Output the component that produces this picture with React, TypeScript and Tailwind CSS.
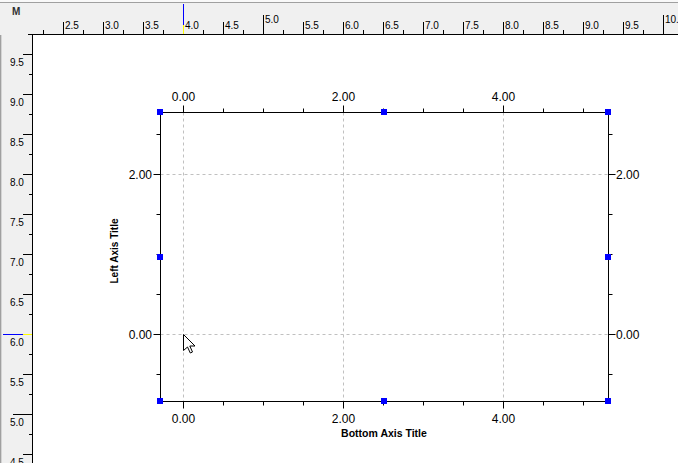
import React from "react";

const font = "'Liberation Sans', Arial, sans-serif";

// top ruler: value v sits at x = 63 + (v - 2.5) * 80
function TopRuler() {
  const ticks = [];
  for (let n = 0; n < 32; n++) {
    const v = 2.25 + n * 0.25;
    const x = 43 + n * 20 + 0.5;
    const major = Math.abs(v % 5) < 0.001;
    const mid = Math.abs(v % 0.5) < 0.001;
    const y1 = major ? 15 : mid ? 22 : 30;
    ticks.push(<line key={"t" + n} x1={x} x2={x} y1={y1} y2={34} stroke="#000" />);
    if (mid) {
      ticks.push(
        <text key={"l" + n} x={x + 1.5} y={major ? 22.5 : 28.5} fontSize={10} fill="#000">
          {v.toFixed(1)}
        </text>
      );
    }
  }
  return (
    <svg width={678} height={35} className="block" style={{ fontFamily: font }}>
      <rect x={0} y={0} width={678} height={2} fill="#f9f9f9" />
      <line x1={0} x2={678} y1={2.5} y2={2.5} stroke="#a0a0a0" />
      <text x={12} y={15} fontSize={10} fontWeight="bold" fill="#303030">
        M
      </text>
      {ticks}
      <line x1={28} x2={678} y1={34.5} y2={34.5} stroke="#000" />
      <line x1={183.5} x2={183.5} y1={4} y2={25} stroke="#0000ff" />
      <line x1={183.5} x2={183.5} y1={25} y2={34} stroke="#ffff00" />
    </svg>
  );
}

// left ruler: value v sits at y = 54 + (9.5 - v) * 80
function LeftRuler() {
  const ticks = [];
  for (let k = 1; k < 22; k++) {
    const v = 9.75 - k * 0.25;
    const y = 34 + k * 20 + 0.5;
    const major = Math.abs(v % 5) < 0.001;
    const mid = Math.abs(v % 0.5) < 0.001;
    const x1 = major ? 13 : mid ? 23 : 29;
    ticks.push(<line key={"t" + k} x1={x1} x2={32} y1={y} y2={y} stroke="#000" />);
    if (mid) {
      ticks.push(
        <text key={"l" + k} x={10} y={y + 11} fontSize={10} fill="#000">
          {v.toFixed(1)}
        </text>
      );
    }
  }
  return (
    <svg width={33} height={428} viewBox="0 35 33 428" className="block shrink-0" style={{ fontFamily: font }}>
      <rect x={0} y={35} width={1} height={428} fill="#a0a0a0" />
      <rect x={1} y={35} width={1} height={428} fill="#d4d4d4" />
      {ticks}
      <line x1={32.5} x2={32.5} y1={35} y2={463} stroke="#000" />
      <line x1={3} x2={23} y1={334.5} y2={334.5} stroke="#0000ff" />
      <line x1={23} x2={32} y1={334.5} y2={334.5} stroke="#ffff00" />
    </svg>
  );
}

function Chart() {
  const L = 160.5;
  const R = 608.5;
  const T = 112.5;
  const B = 401.5;
  const xs = Array.from({ length: 11 }, (_, k) => 183 + k * 40);
  const ys = [134, 174, 214, 254, 294, 334, 374];
  const xLabels = [
    { x: 183, t: "0.00" },
    { x: 343, t: "2.00" },
    { x: 503, t: "4.00" },
  ];
  const yLabels = [
    { y: 174, t: "2.00" },
    { y: 334, t: "0.00" },
  ];
  const handles = [
    [160, 112],
    [384, 112],
    [608, 112],
    [160, 257],
    [608, 257],
    [160, 401],
    [384, 401],
    [608, 401],
  ];

  return (
    <svg width={645} height={428} viewBox="33 35 645 428" className="block" style={{ fontFamily: font }}>
      {/* grid */}
      {xLabels.map((l) => (
        <line key={"gx" + l.x} x1={l.x + 0.5} x2={l.x + 0.5} y1={T} y2={B} stroke="#c0c0c0" strokeDasharray="3 3" />
      ))}
      {yLabels.map((l) => (
        <line key={"gy" + l.y} x1={L} x2={R} y1={l.y + 0.5} y2={l.y + 0.5} stroke="#c0c0c0" strokeDasharray="3 3" />
      ))}

      {/* x ticks */}
      {xs.map((x) => {
        const major = (x - 183) % 160 === 0;
        const len = major ? 7 : 4;
        return (
          <g key={"xt" + x}>
            <line x1={x + 0.5} x2={x + 0.5} y1={T - len} y2={T} stroke="#000" />
            <line x1={x + 0.5} x2={x + 0.5} y1={B} y2={B + len} stroke="#000" />
          </g>
        );
      })}
      {/* y ticks */}
      {ys.map((y) => {
        const major = y === 174 || y === 334;
        const len = major ? 7 : 4;
        return (
          <g key={"yt" + y}>
            <line x1={L - len} x2={L} y1={y + 0.5} y2={y + 0.5} stroke="#000" />
            <line x1={R} x2={R + len} y1={y + 0.5} y2={y + 0.5} stroke="#000" />
          </g>
        );
      })}

      {/* frame */}
      <rect x={L} y={T} width={R - L} height={B - T} fill="none" stroke="#000" />

      {/* labels */}
      {xLabels.map((l) => (
        <g key={"xl" + l.x}>
          <text x={l.x + 0.5} y={101} fontSize={12} textAnchor="middle" fill="#000">
            {l.t}
          </text>
          <text x={l.x + 0.5} y={422.5} fontSize={12} textAnchor="middle" fill="#000">
            {l.t}
          </text>
        </g>
      ))}
      {yLabels.map((l) => (
        <g key={"yl" + l.y}>
          <text x={152} y={l.y + 5} fontSize={12} textAnchor="end" fill="#000">
            {l.t}
          </text>
          <text x={616} y={l.y + 5} fontSize={12} fill="#000">
            {l.t}
          </text>
        </g>
      ))}

      {/* axis titles */}
      <text x={384} y={437} fontSize={10.5} fontWeight="bold" textAnchor="middle" fill="#000">
        Bottom Axis Title
      </text>
      <text
        x={0}
        y={0}
        fontSize={10}
        fontWeight="bold"
        textAnchor="middle"
        fill="#000"
        transform="translate(118 251) rotate(-90)"
      >
        Left Axis Title
      </text>

      {/* selection handles */}
      {handles.map(([x, y]) => (
        <rect key={"h" + x + "-" + y} x={x - 3} y={y - 3} width={6} height={6} fill="#0000ff" />
      ))}

      {/* mouse pointer */}
      <path
        d="M0 0 V16 L4 12.5 L6.8 18.5 L9 17.5 L6.3 11.5 H11.5 Z"
        transform="translate(183.5 334.5)"
        fill="#fff"
        stroke="#000"
        strokeWidth={1}
        strokeLinejoin="miter"
      />
    </svg>
  );
}

export default function App() {
  return (
    <div className="flex h-[463px] w-[678px] flex-col overflow-hidden bg-[#f0f0f0]">
      <TopRuler />
      <div className="flex flex-1">
        <LeftRuler />
        <div className="flex-1 bg-white">
          <Chart />
        </div>
      </div>
    </div>
  );
}
